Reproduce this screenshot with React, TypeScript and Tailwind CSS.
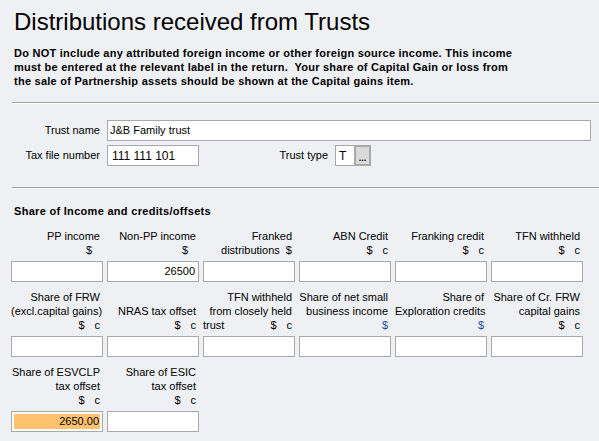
import * as React from "react";

type Unit = "s" | "sc" | "sBlue" | "none";

type Field = {
  lines: React.ReactNode[];
  unit: Unit;
  value?: string;
  highlight?: boolean;
};

function Units({ unit }: { unit: Unit }) {
  if (unit === "sc")
    return (
      <span className="whitespace-nowrap">
        $<span className="ml-[10px]">c</span>
      </span>
    );
  if (unit === "sBlue") return <span className="text-[#1f4e9c]">$</span>;
  if (unit === "s") return <span className="pr-[8px]">$</span>;
  return null;
}

function Cell({ f }: { f: Field }) {
  return (
    <div className="flex flex-col">
      <div className="flex flex-1 flex-col justify-end pr-[3px] text-right leading-[14px]">
        {f.lines.map((l, i) => (
          <div key={i} className="whitespace-nowrap">
            {l}
          </div>
        ))}
        {f.unit !== "none" && (
          <div>
            <Units unit={f.unit} />
          </div>
        )}
      </div>
      <div className="mt-[4px] h-[21px] border border-[#a9a9a9] bg-white p-[2px]">
        <div
          className={
            "flex h-full items-center justify-end pr-[1px] leading-none " +
            (f.highlight ? "bg-[#ffc36f]" : "")
          }
        >
          {f.value}
        </div>
      </div>
    </div>
  );
}

const row1: Field[] = [
  { lines: ["PP income"], unit: "s" },
  { lines: ["Non-PP income"], unit: "s", value: "26500" },
  { lines: ["Franked", <span className="whitespace-pre">distributions  $</span>], unit: "none" },
  { lines: ["ABN Credit"], unit: "sc" },
  { lines: ["Franking credit"], unit: "sc" },
  { lines: ["TFN withheld"], unit: "sc" },
];

const row2: Field[] = [
  { lines: ["Share of FRW", <span className="-mr-[2px]">(excl.capital gains)</span>], unit: "sc" },
  { lines: ["NRAS tax offset"], unit: "sc" },
  {
    lines: [
      "TFN withheld",
      "from closely held",
      <span className="flex justify-between">
        <span>trust</span>
        <span className="whitespace-nowrap">
          $<span className="ml-[10px]">c</span>
        </span>
      </span>,
    ],
    unit: "none",
  },
  { lines: ["Share of net small", "business income"], unit: "sBlue" },
  { lines: ["Share of", "Exploration credits"], unit: "sBlue" },
  { lines: ["Share of Cr. FRW", "capital gains"], unit: "sc" },
];

const row3: Field[] = [
  { lines: ["Share of ESVCLP", "tax offset"], unit: "sc", value: "2650.00", highlight: true },
  { lines: ["Share of ESIC", "tax offset"], unit: "sc" },
];

function Rule() {
  return <div className="ml-[12px] border-t border-b border-t-[#a0a0a0] border-b-white" />;
}

export default function App() {
  return (
    <div
      className="h-[441px] w-[599px] overflow-hidden bg-[#eff0f4] pt-[8px] text-[11px] text-black"
      style={{ fontFamily: '"Liberation Sans", Arial, sans-serif' }}
    >
      <h1 className="pl-[14px] text-[24px] leading-[28px] font-normal">Distributions received from Trusts</h1>
      <p className="mt-[10px] pl-[14px] font-bold leading-[14px] tracking-[0.25px]">
        Do NOT include any attributed foreign income or other foreign source income. This income
        <br />
        <span className="whitespace-pre">must be entered at the relevant label in the return.  Your share of Capital Gain or loss from</span>
        <br />
        the sale of Partnership assets should be shown at the Capital gains item.
      </p>

      <div className="mt-[14px]">
        <Rule />
      </div>

      <div className="mt-[16px] flex items-center">
        <div className="w-[100px] text-right">Trust name</div>
        <div className="ml-[7px] flex h-[21px] w-[484px] items-center border border-[#a9a9a9] bg-white pl-[2px]">
          J&amp;B Family trust
        </div>
      </div>
      <div className="mt-[4px] flex items-center">
        <div className="w-[100px] text-right">Tax file number</div>
        <div className="ml-[7px] flex h-[21px] w-[92px] items-center border border-[#a9a9a9] bg-white pl-[4px] text-[12px]">
          111 111 101
        </div>
        <div className="w-[129px] text-right">Trust type</div>
        <div className="ml-[7px] flex h-[21px]">
          <div className="flex w-[19px] items-center border border-r-0 border-[#a9a9a9] bg-white pl-[3px] text-[12px]">
            T
          </div>
          <div className="flex w-[17px] items-end justify-center border-2 border-[#a9a9a9] bg-[#dadada] pb-[3px]">
            <span className="text-[9px] leading-[6px] font-bold">...</span>
          </div>
        </div>
      </div>

      <div className="mt-[21px]">
        <Rule />
      </div>

      <div className="mt-[15px] pl-[14px] font-bold leading-[14px] tracking-[0.3px]">Share of Income and credits/offsets</div>

      <div className="mt-[11px] grid grid-cols-[repeat(6,92px)] gap-x-[4px] pl-[11px]">
        {row1.map((f, i) => (
          <Cell key={i} f={f} />
        ))}
      </div>
      <div className="mt-[8px] grid grid-cols-[repeat(6,92px)] gap-x-[4px] pl-[11px]">
        {row2.map((f, i) => (
          <Cell key={i} f={f} />
        ))}
      </div>
      <div className="mt-[8px] grid grid-cols-[repeat(6,92px)] gap-x-[4px] pl-[11px]">
        {row3.map((f, i) => (
          <Cell key={i} f={f} />
        ))}
      </div>
    </div>
  );
}
